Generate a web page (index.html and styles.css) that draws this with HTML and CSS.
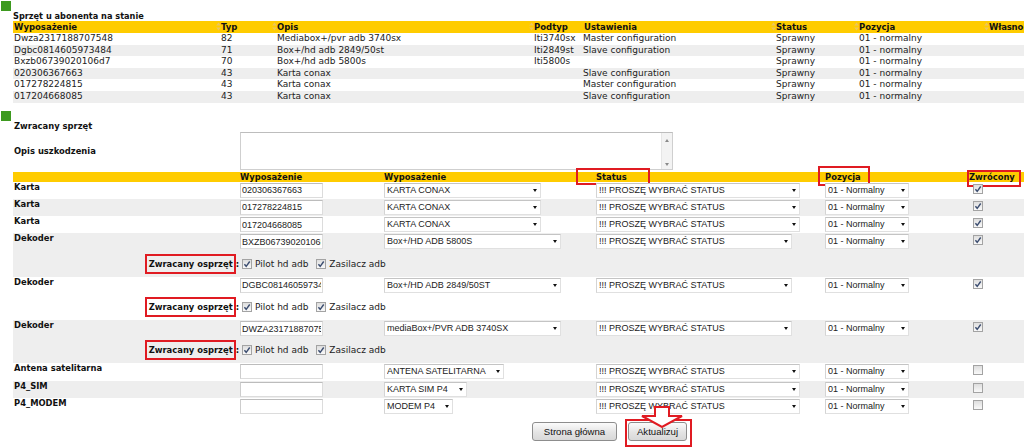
FILE: index.html
```html
<!DOCTYPE html>
<html lang="pl">
<head>
<meta charset="utf-8">
<title>Sprzęt u abonenta</title>
<link rel="stylesheet" href="styles.css">
</head>
<body>
<div class="marker"></div>
<div class="section-title">Sprzęt u abonenta na stanie</div>
<table class="list">
  <colgroup>
    <col class="l1"><col class="l2"><col class="l3"><col class="l4"><col class="l5"><col class="l6"><col class="l7"><col class="l8">
  </colgroup>
  <thead>
    <tr>
      <th class="first">Wyposażenie</th>
      <th><svg class="sort" viewBox="0 0 5 9" width="5" height="9"><path d="M2.5 0.5 4.8 3.6H0.2z M0.2 5.4h4.6L2.5 8.5z"/></svg>Typ</th>
      <th><svg class="sort" viewBox="0 0 5 9" width="5" height="9"><path d="M2.5 0.5 4.8 3.6H0.2z M0.2 5.4h4.6L2.5 8.5z"/></svg>Opis</th>
      <th><svg class="sort" viewBox="0 0 5 9" width="5" height="9"><path d="M2.5 0.5 4.8 3.6H0.2z M0.2 5.4h4.6L2.5 8.5z"/></svg>Podtyp</th>
      <th class="plain">Ustawienia</th>
      <th><svg class="sort" viewBox="0 0 5 9" width="5" height="9"><path d="M2.5 0.5 4.8 3.6H0.2z M0.2 5.4h4.6L2.5 8.5z"/></svg>Status</th>
      <th><svg class="sort" viewBox="0 0 5 9" width="5" height="9"><path d="M2.5 0.5 4.8 3.6H0.2z M0.2 5.4h4.6L2.5 8.5z"/></svg>Pozycja</th>
      <th class="last"><svg class="sort" viewBox="0 0 5 9" width="5" height="9"><path d="M2.5 0.5 4.8 3.6H0.2z M0.2 5.4h4.6L2.5 8.5z"/></svg>Własno</th>
    </tr>
  </thead>
  <tbody>
    <tr><td class="first">Dwza2317188707548</td><td>82</td><td>Mediabox+/pvr adb 3740sx</td><td>Iti3740sx</td><td class="plain">Master configuration</td><td>Sprawny</td><td>01 - normalny</td><td></td></tr>
    <tr class="alt"><td class="first">Dgbc0814605973484</td><td>71</td><td>Box+/hd adb 2849/50st</td><td>Iti2849st</td><td class="plain">Slave configuration</td><td>Sprawny</td><td>01 - normalny</td><td></td></tr>
    <tr><td class="first">Bxzb06739020106d7</td><td>70</td><td>Box+/hd adb 5800s</td><td>Iti5800s</td><td class="plain"></td><td>Sprawny</td><td>01 - normalny</td><td></td></tr>
    <tr class="alt"><td class="first">020306367663</td><td>43</td><td>Karta conax</td><td></td><td class="plain">Slave configuration</td><td>Sprawny</td><td>01 - normalny</td><td></td></tr>
    <tr><td class="first">017278224815</td><td>43</td><td>Karta conax</td><td></td><td class="plain">Master configuration</td><td>Sprawny</td><td>01 - normalny</td><td></td></tr>
    <tr class="alt"><td class="first">017204668085</td><td>43</td><td>Karta conax</td><td></td><td class="plain">Slave configuration</td><td>Sprawny</td><td>01 - normalny</td><td></td></tr>
  </tbody>
</table>

<div class="marker m2"></div>
<table class="form">
  <colgroup>
    <col class="f1"><col class="f2"><col class="f3"><col class="f4"><col class="f5"><col class="f6">
  </colgroup>
  <tr class="caption"><td colspan="6" class="lbl">Zwracany sprzęt</td></tr>
  <tr class="desc">
    <td class="lbl mid">Opis uszkodzenia</td>
    <td colspan="3">
      <div class="ta">
        <textarea aria-label="Opis uszkodzenia"></textarea>
        <div class="sb"><span class="up"></span><span class="down"></span></div>
      </div>
    </td>
    <td></td><td></td>
  </tr>
  <tr class="head">
    <th></th>
    <th>Wyposażenie</th>
    <th>Wyposażenie</th>
    <th class="rel">Status<span class="mark m-status"></span></th>
    <th class="rel">Pozycja<span class="mark m-poz"></span></th>
    <th class="rel">Zwrócony<span class="mark m-zwr"></span></th>
  </tr>

  <tr class="row">
    <td class="lbl">Karta</td>
    <td><input class="txt" value="020306367663"></td>
    <td><span class="sel w157"><select><option>KARTA CONAX</option></select></span></td>
    <td><span class="sel w204"><select><option>!!! PROSZĘ WYBRAĆ STATUS</option></select></span></td>
    <td><span class="sel w84"><select><option>01 - Normalny</option></select></span></td>
    <td class="chk"><span class="cb on"><svg viewBox="0 0 10 10" width="10" height="10"><path d="M2.4 5.2 4.2 7.3 7.7 2.5"/></svg></span></td>
  </tr>
  <tr class="row alt">
    <td class="lbl">Karta</td>
    <td><input class="txt" value="017278224815"></td>
    <td><span class="sel w157"><select><option>KARTA CONAX</option></select></span></td>
    <td><span class="sel w204"><select><option>!!! PROSZĘ WYBRAĆ STATUS</option></select></span></td>
    <td><span class="sel w84"><select><option>01 - Normalny</option></select></span></td>
    <td class="chk"><span class="cb on"><svg viewBox="0 0 10 10" width="10" height="10"><path d="M2.4 5.2 4.2 7.3 7.7 2.5"/></svg></span></td>
  </tr>
  <tr class="row">
    <td class="lbl">Karta</td>
    <td><input class="txt" value="017204668085"></td>
    <td><span class="sel w157"><select><option>KARTA CONAX</option></select></span></td>
    <td><span class="sel w204"><select><option>!!! PROSZĘ WYBRAĆ STATUS</option></select></span></td>
    <td><span class="sel w84"><select><option>01 - Normalny</option></select></span></td>
    <td class="chk"><span class="cb on"><svg viewBox="0 0 10 10" width="10" height="10"><path d="M2.4 5.2 4.2 7.3 7.7 2.5"/></svg></span></td>
  </tr>

  <tr class="row alt">
    <td class="lbl">Dekoder</td>
    <td><input class="txt" value="BXZB06739020106D7"></td>
    <td><span class="sel w177"><select><option>Box+/HD ADB 5800S</option></select></span></td>
    <td><span class="sel w196"><select><option>!!! PROSZĘ WYBRAĆ STATUS</option></select></span></td>
    <td><span class="sel w84"><select><option>01 - Normalny</option></select></span></td>
    <td class="chk"><span class="cb on"><svg viewBox="0 0 10 10" width="10" height="10"><path d="M2.4 5.2 4.2 7.3 7.7 2.5"/></svg></span></td>
  </tr>
  <tr class="sub alt">
    <td class="osp"><span class="redbox">Zwracany osprzęt</span>:</td>
    <td colspan="5" class="acc">
      <div class="acc-row">
        <span class="cb on"><svg viewBox="0 0 10 10" width="10" height="10"><path d="M2.4 5.2 4.2 7.3 7.7 2.5"/></svg></span><span class="acc-l">Pilot hd adb</span><span class="cb on"><svg viewBox="0 0 10 10" width="10" height="10"><path d="M2.4 5.2 4.2 7.3 7.7 2.5"/></svg></span><span class="acc-l">Zasilacz adb</span>
      </div>
    </td>
  </tr>

  <tr class="row">
    <td class="lbl">Dekoder</td>
    <td><input class="txt" value="DGBC0814605973484"></td>
    <td><span class="sel w177"><select><option>Box+/HD ADB 2849/50ST</option></select></span></td>
    <td><span class="sel w196"><select><option>!!! PROSZĘ WYBRAĆ STATUS</option></select></span></td>
    <td><span class="sel w84"><select><option>01 - Normalny</option></select></span></td>
    <td class="chk"><span class="cb on"><svg viewBox="0 0 10 10" width="10" height="10"><path d="M2.4 5.2 4.2 7.3 7.7 2.5"/></svg></span></td>
  </tr>
  <tr class="sub">
    <td class="osp"><span class="redbox">Zwracany osprzęt</span>:</td>
    <td colspan="5" class="acc">
      <div class="acc-row">
        <span class="cb on"><svg viewBox="0 0 10 10" width="10" height="10"><path d="M2.4 5.2 4.2 7.3 7.7 2.5"/></svg></span><span class="acc-l">Pilot hd adb</span><span class="cb on"><svg viewBox="0 0 10 10" width="10" height="10"><path d="M2.4 5.2 4.2 7.3 7.7 2.5"/></svg></span><span class="acc-l">Zasilacz adb</span>
      </div>
    </td>
  </tr>

  <tr class="row alt">
    <td class="lbl">Dekoder</td>
    <td><input class="txt" value="DWZA2317188707548"></td>
    <td><span class="sel w177"><select><option>mediaBox+/PVR ADB 3740SX</option></select></span></td>
    <td><span class="sel w196"><select><option>!!! PROSZĘ WYBRAĆ STATUS</option></select></span></td>
    <td><span class="sel w84"><select><option>01 - Normalny</option></select></span></td>
    <td class="chk"><span class="cb on"><svg viewBox="0 0 10 10" width="10" height="10"><path d="M2.4 5.2 4.2 7.3 7.7 2.5"/></svg></span></td>
  </tr>
  <tr class="sub alt">
    <td class="osp"><span class="redbox">Zwracany osprzęt</span>:</td>
    <td colspan="5" class="acc">
      <div class="acc-row">
        <span class="cb on"><svg viewBox="0 0 10 10" width="10" height="10"><path d="M2.4 5.2 4.2 7.3 7.7 2.5"/></svg></span><span class="acc-l">Pilot hd adb</span><span class="cb on"><svg viewBox="0 0 10 10" width="10" height="10"><path d="M2.4 5.2 4.2 7.3 7.7 2.5"/></svg></span><span class="acc-l">Zasilacz adb</span>
      </div>
    </td>
  </tr>

  <tr class="row">
    <td class="lbl">Antena satelitarna</td>
    <td><input class="txt" value=""></td>
    <td><span class="sel w120"><select><option>ANTENA SATELITARNA</option></select></span></td>
    <td><span class="sel w204"><select><option>!!! PROSZĘ WYBRAĆ STATUS</option></select></span></td>
    <td><span class="sel w84"><select><option>01 - Normalny</option></select></span></td>
    <td class="chk"><span class="cb"></span></td>
  </tr>
  <tr class="row alt">
    <td class="lbl">P4_SIM</td>
    <td><input class="txt" value=""></td>
    <td><span class="sel w83"><select><option>KARTA SIM P4</option></select></span></td>
    <td><span class="sel w204"><select><option>!!! PROSZĘ WYBRAĆ STATUS</option></select></span></td>
    <td><span class="sel w84"><select><option>01 - Normalny</option></select></span></td>
    <td class="chk"><span class="cb"></span></td>
  </tr>
  <tr class="row">
    <td class="lbl">P4_MODEM</td>
    <td><input class="txt" value=""></td>
    <td><span class="sel w69"><select><option>MODEM P4</option></select></span></td>
    <td><span class="sel w204"><select><option>!!! PROSZĘ WYBRAĆ STATUS</option></select></span></td>
    <td><span class="sel w84"><select><option>01 - Normalny</option></select></span></td>
    <td class="chk"><span class="cb"></span></td>
  </tr>
</table>

<div class="actions">
  <button class="btn home" type="button">Strona główna</button>
  <span class="hl">
    <svg class="arrow" viewBox="0 0 44 22" width="44" height="22"><path d="M15 1H29V10H42L22 21L2 10H15Z"/></svg>
    <button class="btn" type="button">Aktualizuj</button>
  </span>
</div>
</body>
</html>
```

FILE: styles.css
```css
html, body {
  margin: 0;
  padding: 0;
  overflow: hidden;
  background: #fff;
}
body {
  width: 1024px;
  height: 448px;
  font-family: "DejaVu Sans", Verdana, sans-serif;
  font-size: 9px;
  color: #222;
}

.marker {
  width: 10px;
  height: 10px;
  margin: 1px 0 0 1px;
  background: #3d9a1f;
}
.marker.m2 {
  margin-top: 8px;
}

.section-title {
  margin-left: 13px;
  height: 10px;
  line-height: 10px;
  font-size: 8.2px;
  font-weight: bold;
  color: #111;
}

/* ---------- list table ---------- */
.list {
  margin-left: 13px;
  width: 1011px;
  table-layout: fixed;
  border-collapse: collapse;
}
.list col.l1 { width: 202px; }
.list col.l2 { width: 56px; }
.list col.l3 { width: 257px; }
.list col.l4 { width: 54px; }
.list col.l5 { width: 188px; }
.list col.l6 { width: 83px; }
.list col.l7 { width: 130px; }
.list col.l8 { width: 41px; }

.list th {
  background: #ffcc00;
  height: 12px;
  line-height: 12px;
  padding: 0 0 0 1px;
  text-align: left;
  font-size: 8.5px;
  font-weight: bold;
  color: #111;
  white-space: nowrap;
  overflow: hidden;
}
.list th.plain { padding-left: 2px; }
.list th.last { letter-spacing: -0.2px; }
.sort {
  display: inline-block;
  vertical-align: -1px;
  fill: #ecc65e;
}
.list td {
  height: 11.6px;
  line-height: 11.6px;
  padding: 0 0 0 6px;
  white-space: nowrap;
  overflow: hidden;
}
.list td.first { padding-left: 1px; }
.list td.plain { padding-left: 1px; }
.list tr.alt td { background: #eeeeee; }

/* ---------- form table ---------- */
.form {
  margin-left: 13px;
  width: 1011px;
  table-layout: fixed;
  border-collapse: collapse;
}
.form col.f1 { width: 227px; }
.form col.f2 { width: 144px; }
.form col.f3 { width: 212px; }
.form col.f4 { width: 229px; }
.form col.f5 { width: 144px; }
.form col.f6 { width: 55px; }

.form td {
  padding: 0;
  vertical-align: top;
  white-space: nowrap;
}
.form tr.alt td { background: #eeeeee; }

.lbl {
  padding-left: 1px !important;
  line-height: 11px;
  font-size: 8.4px;
  font-weight: bold;
  color: #111;
}
.lbl.mid { vertical-align: middle !important; }

.caption td { height: 11px; }
.desc td { height: 40px; }

.ta {
  display: flex;
  width: 431px;
  height: 36px;
  border: 1px solid #cfcfcf;
  border-top-color: #bdbdbd;
  background: #fff;
}
.ta textarea {
  flex: 1;
  border: 0;
  margin: 0;
  padding: 0;
  resize: none;
  outline: none;
  background: #fff;
}
.sb {
  width: 10px;
  display: flex;
  flex-direction: column;
  justify-content: space-between;
  align-items: center;
  padding: 6px 0 3px;
  background: #f3f3f3;
  border-left: 1px solid #e6e6e6;
}
.sb .up, .sb .down {
  width: 0;
  height: 0;
  border-left: 2.5px solid transparent;
  border-right: 2.5px solid transparent;
}
.sb .up { border-bottom: 3px solid #8a8a8a; }
.sb .down { border-top: 3px solid #8a8a8a; }

.head th {
  background: #ffcc00;
  height: 10px;
  line-height: 10px;
  padding: 0;
  text-align: left;
  font-size: 8.4px;
  font-weight: bold;
  color: #111;
  white-space: nowrap;
}
.head th.rel { position: relative; }
.mark {
  position: absolute;
  border: 2px solid #e01b22;
  box-sizing: border-box;
}
.m-status { left: -20px; top: -4px; width: 74px; height: 17px; }
.m-poz { left: -7px; top: -6px; width: 52px; height: 20px; }
.m-zwr { left: -2px; top: -2px; width: 54px; height: 17px; }

.row td { height: 17.3px; }
.sub td { height: 26px; vertical-align: middle; }

.txt {
  display: block;
  box-sizing: border-box;
  width: 83px;
  height: 15px;
  margin: 1px 0 0 0;
  padding: 0 1px;
  border: 1px solid #dcdcdc;
  border-top-color: #bcbcbc;
  border-left-color: #cdcdcd;
  background: #fff;
  font-family: "Liberation Sans", Arial, sans-serif;
  font-size: 9px;
  color: #222;
  outline: none;
}

.sel {
  position: relative;
  display: block;
  height: 15px;
  margin-top: 1px;
}
.sel select {
  -webkit-appearance: none;
  appearance: none;
  box-sizing: border-box;
  width: 100%;
  height: 15px;
  margin: 0;
  padding: 0 12px 0 2px;
  border: 1px solid #e0e0e0;
  border-top-color: #c4c4c4;
  border-left-color: #d4d4d4;
  border-radius: 0;
  background: #fff;
  font-family: "Liberation Sans", Arial, sans-serif;
  font-size: 9px;
  line-height: 13px;
  color: #222;
  outline: none;
}
.sel::after {
  content: "";
  position: absolute;
  right: 4px;
  top: 6px;
  border-left: 2.5px solid transparent;
  border-right: 2.5px solid transparent;
  border-top: 3px solid #111;
}
.w157 { width: 157px; }
.w177 { width: 177px; }
.w120 { width: 120px; }
.w83 { width: 83px; }
.w69 { width: 69px; }
.w204 { width: 204px; }
.w196 { width: 196px; }
.w84 { width: 84px; }

.cb {
  display: inline-block;
  flex: none;
  box-sizing: border-box;
  width: 10px;
  height: 10px;
  border: 1px solid #a3a3a3;
  background: linear-gradient(#dedede, #f9f9f9);
  vertical-align: middle;
  position: relative;
}
.cb svg {
  position: absolute;
  left: -1px;
  top: -1px;
  fill: none;
  stroke: #3b4d70;
  stroke-width: 1.4;
}
.form td.chk { padding-left: 4px; }
.chk .cb { margin-top: 2px; }

.osp {
  text-align: right;
  padding-right: 1px !important;
  font-size: 8.4px;
  font-weight: bold;
  color: #111;
}
.redbox {
  display: inline-block;
  border: 2px solid #e01b22;
  padding: 3px 1px 3px 2px;
  line-height: 10px;
  vertical-align: middle;
}
.acc {
  padding-left: 2px !important;
  font-size: 9px;
}
.acc-row {
  display: flex;
  align-items: center;
}
.acc-l {
  margin: 0 8px 0 3px;
  color: #222;
}

/* ---------- buttons ---------- */
.actions {
  display: flex;
  align-items: flex-start;
  gap: 8px;
  padding-left: 532px;
  margin-top: 4px;
}
.btn {
  box-sizing: border-box;
  height: 19px;
  padding: 0 9px;
  border: 1px solid #8d8d8d;
  border-radius: 3px;
  background: linear-gradient(#fbfbfb, #e4e4e4 55%, #d8d8d8);
  font-family: "Liberation Sans", Arial, sans-serif;
  font-size: 9.6px;
  color: #111;
}
.btn.home {
  width: 85px;
  margin-top: 3px;
}
.hl {
  position: relative;
  display: block;
  padding: 1px 3px 4px 1px;
  border: 2px solid #e01b22;
}
.hl .btn { display: block; width: 59px; padding: 0; }
.arrow {
  position: absolute;
  left: 13px;
  top: -15px;
  fill: #fff;
  stroke: #e01b22;
  stroke-width: 2;
}
```
